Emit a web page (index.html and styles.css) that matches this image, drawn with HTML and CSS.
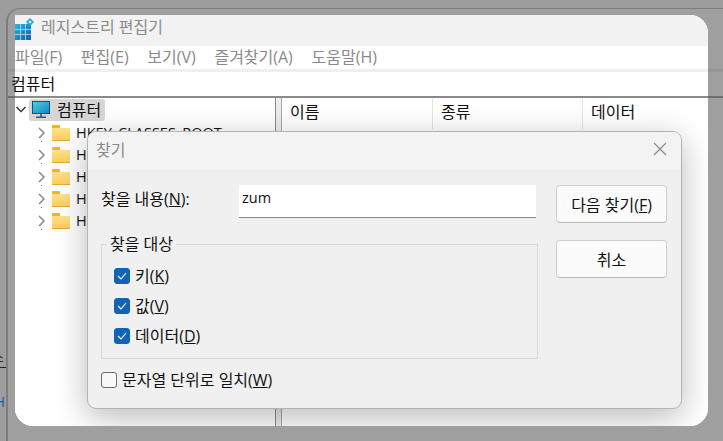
FILE: index.html
```html
<!DOCTYPE html>
<html lang="ko">
<head>
<meta charset="utf-8">
<title>레지스트리 편집기</title>
<link rel="stylesheet" href="styles.css">
</head>
<body>
<div class="desktop">
  <div class="backwin">
    <div class="back-strip"></div>
    <div class="back-line"></div>
    <div class="back-text">스</div>
    <div class="back-rule"></div>
    <div class="back-blue">H</div>
  </div>
  <main class="window">
    <header class="titlebar">
      <svg class="appicon" width="20" height="24" viewBox="0 0 20 24">
        <defs><linearGradient id="tile" x1="0" y1="0" x2="1" y2="1"><stop offset="0" stop-color="#2bb5dc"/><stop offset="1" stop-color="#0b62b5"/></linearGradient></defs>
        <rect x="0" y="7" width="16" height="16" fill="url(#tile)"/>
        <path d="M5.500 7v16M10.500 7v16M0 12.500h16M0 17.500h16" stroke="#bfe3f2" stroke-opacity=".75" stroke-width="1"/>
        <path d="M15 1l4 4-4 4-4-4z" fill="#2aa2d8"/>
        <rect x="13.800" y="3.800" width="2.400" height="2.400" fill="#cfeefa"/>
      </svg>
      <span class="title-text">레지스트리 편집기</span>
    </header>
    <nav class="menubar">
      <span>파일(F)</span><span>편집(E)</span><span>보기(V)</span><span>즐겨찾기(A)</span><span>도움말(H)</span>
    </nav>
    <div class="menu-gap"></div>
    <div class="addressbar"></div>
    <div class="panes">
      <section class="tree">
        <div class="tree-row root">
          <svg class="chev" width="12" height="12" viewBox="0 0 12 12"><path d="M1.500 4l4.500 4.500L10.500 4" fill="none" stroke="#333" stroke-width="1.500"/></svg>
          <div class="selected">
            <svg width="20" height="19" viewBox="0 0 20 19">
              <defs><linearGradient id="scr" x1="0" y1="0" x2="1" y2="1"><stop offset="0" stop-color="#4fd0e0"/><stop offset="1" stop-color="#0f86c6"/></linearGradient></defs>
              <rect x=".5" y=".5" width="17" height="12" fill="url(#scr)" stroke="#0b4f86"/>
              <rect x="8" y="13" width="2" height="3" fill="#5a6b78"/>
              <rect x="4" y="15.500" width="10" height="1.500" fill="#0b5f9a"/>
            </svg>
            <span class="root-label">컴퓨터</span>
          </div>
        </div>
        <div class="tree-row hive"><svg class="chev" width="10" height="12" viewBox="0 0 10 12"><path d="M2 1l5 5-5 5" fill="none" stroke="#8a8a8a" stroke-width="1.500"/></svg><span class="folder"></span><span class="hive-label">HKEY_CLASSES_ROOT</span></div>
        <div class="tree-row hive"><svg class="chev" width="10" height="12" viewBox="0 0 10 12"><path d="M2 1l5 5-5 5" fill="none" stroke="#8a8a8a" stroke-width="1.500"/></svg><span class="folder"></span><span class="hive-label">HKEY_CURRENT_USER</span></div>
        <div class="tree-row hive"><svg class="chev" width="10" height="12" viewBox="0 0 10 12"><path d="M2 1l5 5-5 5" fill="none" stroke="#8a8a8a" stroke-width="1.500"/></svg><span class="folder"></span><span class="hive-label">HKEY_LOCAL_MACHINE</span></div>
        <div class="tree-row hive"><svg class="chev" width="10" height="12" viewBox="0 0 10 12"><path d="M2 1l5 5-5 5" fill="none" stroke="#8a8a8a" stroke-width="1.500"/></svg><span class="folder"></span><span class="hive-label">HKEY_USERS</span></div>
        <div class="tree-row hive"><svg class="chev" width="10" height="12" viewBox="0 0 10 12"><path d="M2 1l5 5-5 5" fill="none" stroke="#8a8a8a" stroke-width="1.500"/></svg><span class="folder"></span><span class="hive-label">HKEY_CURRENT_CONFIG</span></div>
      </section>
      <div class="splitter"></div>
      <section class="list">
        <div class="list-head">
          <div class="col col-name">이름</div>
          <div class="col col-type">종류</div>
          <div class="col col-data">데이터</div>
        </div>
      </section>
    </div>
    <div class="dialog">
      <header class="dlg-title">
        <span>찾기</span>
        <svg width="14" height="14" viewBox="0 0 14 14"><path d="M1 1l12 12M13 1L1 13" stroke="#8a8a8a" stroke-width="1.200" fill="none"/></svg>
      </header>
      <div class="dlg-body">
        <div class="dlg-main">
          <div class="find-row">
            <label class="find-label">찾을 내용(<u>N</u>):</label>
            <div class="find-input">zum</div>
          </div>
          <fieldset class="group">
            <legend>찾을 대상</legend>
            <div class="check-row"><span class="check on"><svg width="10" height="8" viewBox="0 0 10 8"><path d="M1 4l3 3 5-6" fill="none" stroke="#fff" stroke-width="1.100"/></svg></span><span>키(<u>K</u>)</span></div>
            <div class="check-row"><span class="check on"><svg width="10" height="8" viewBox="0 0 10 8"><path d="M1 4l3 3 5-6" fill="none" stroke="#fff" stroke-width="1.100"/></svg></span><span>값(<u>V</u>)</span></div>
            <div class="check-row"><span class="check on"><svg width="10" height="8" viewBox="0 0 10 8"><path d="M1 4l3 3 5-6" fill="none" stroke="#fff" stroke-width="1.100"/></svg></span><span>데이터(<u>D</u>)</span></div>
          </fieldset>
          <div class="check-row whole"><span class="check"></span><span>문자열 단위로 일치(<u>W</u>)</span></div>
        </div>
        <div class="dlg-side">
          <button class="btn">다음 찾기(<u>F</u>)</button>
          <button class="btn">취소</button>
        </div>
      </div>
    </div>
  </main>
  <div class="address-text">컴퓨터</div>
</div>
</body>
</html>
```
FILE: styles.css
```css
* { box-sizing: border-box; }
html, body { margin: 0; padding: 0; }
body {
  width: 723px;
  height: 441px;
  overflow: hidden;
  font-family: "Open Sans", "Noto Sans CJK KR", sans-serif;
  font-size: 16px;
  color: #111;
}
.desktop {
  position: relative;
  width: 723px;
  height: 441px;
  overflow: hidden;
  background: #9d9d9d;
}
.backwin {
  position: absolute;
  left: 6px;
  top: 8px;
  width: 760px;
  height: 460px;
  border-top: 1px solid #7d7d7d;
  border-left: 2px solid #7d7d7d;
  border-top-left-radius: 14px;
  background: #9f9f9f;
}
.back-strip {
  position: absolute;
  left: 0;
  right: 0;
  top: 60px;
  height: 3px;
  background: #959595;
}
.back-line {
  position: absolute;
  left: 0;
  right: 0;
  top: 87px;
  height: 2px;
  background: #6e6e6e;
}
.back-text, .back-rule, .back-blue { position: absolute; }
.back-text { left: -17px; top: 339px; font-size: 14px; line-height: 18px; color: #333; }
.back-rule { left: -8px; top: 358px; width: 6px; height: 1px; background: #222; }
.back-blue { left: -14px; top: 383px; font-size: 15px; line-height: 18px; color: #1a5fa8; }

.window {
  position: absolute;
  left: 15px;
  top: 15px;
  width: 693px;
  height: 411px;
  overflow: hidden;
  background: #fff;
  border-radius: 0 18px 18px 18px;
  display: flex;
  flex-direction: column;
}
.titlebar {
  height: 31px;
  flex: none;
  background: #f2f2f2;
  display: flex;
  align-items: center;
  gap: 6px;
}
.appicon { flex: none; margin-top: -3px; }
.title-text { font-size: 16px; line-height: 24px; color: #8b8b8b; margin-top: -8px; }
.menubar {
  height: 23px;
  flex: none;
  background: #fff;
  display: flex;
  align-items: center;
  gap: 18.700px;
  font-size: 16px;
  line-height: 20px;
  color: #8a8a8a;
  padding-bottom: 1px;
}
.menu-gap { height: 3px; flex: none; background: #efefef; }
.addressbar { height: 24px; flex: none; background: #fff; }
.panes {
  flex: 1;
  display: flex;
  min-height: 0;
  border-top: 2px solid #8a8a8a;
}
.tree {
  width: 260px;
  flex: none;
  background: #fff;
  display: flex;
  flex-direction: column;
}
.tree-row {
  height: 22px;
  flex: none;
  display: flex;
  align-items: center;
}
.root .chev { margin-right: 2px; flex: none; }
.selected {
  height: 22px;
  width: 76px;
  background: #d6d6d6;
  border-radius: 3px;
  display: flex;
  align-items: center;
  gap: 5px;
  padding-left: 3px;
  margin-top: 2px;
}
.root-label { font-size: 16px; line-height: 20px; color: #111; }
.hive { padding-left: 22px; color: #111; font-size: 14.500px; position: relative; top: 2px; }
.hive::after {
  content: "";
  position: absolute;
  left: 26px;
  top: 19px;
  width: 1px;
  height: 1px;
  background: #777;
}
.hive .chev { flex: none; margin-right: 5px; }
.folder {
  position: relative;
  width: 18px;
  height: 13px;
  margin-top: 2px;
  margin-right: 6px;
  flex: none;
  background: linear-gradient(#ffe38a, #fbcf62);
  border-bottom: 1px solid #e8a92e;
}
.folder::before {
  content: "";
  position: absolute;
  left: 0;
  top: -3px;
  width: 8px;
  height: 3px;
  background: #f5b225;
  border-radius: 1px 1px 0 0;
}
.hive-label { white-space: nowrap; line-height: 20px; }
.splitter {
  width: 7px;
  flex: none;
  background: #ececec;
  border-left: 1px solid #8a8a8a;
  border-right: 1px solid #a8a8a8;
}
.list { flex: 1; background: #fff; }
.list-head { display: flex; height: 31px; }
.col { font-size: 16px; line-height: 28px; padding-left: 8px; position: relative; }
.col-name { width: 150px; }
.col-type { width: 150px; border-left: 1px solid #e4e4e4; }
.col-data { flex: 1; border-left: 1px solid #e4e4e4; }

.dialog {
  position: absolute;
  left: 72px;
  top: 116px;
  width: 595px;
  height: 278px;
  background: #f0f0f0;
  border: 1px solid #b4b4b4;
  border-radius: 9px;
  box-shadow: 0 8px 32px rgba(0, 0, 0, .28);
  display: flex;
  flex-direction: column;
  overflow: hidden;
}
.dlg-title {
  height: 37px;
  flex: none;
  background: #f3f3f3;
  display: flex;
  align-items: center;
  justify-content: space-between;
  padding: 0 14px 4px 8px;
  font-size: 16px;
  color: #8a8a8a;
}
.dlg-body {
  flex: 1;
  display: flex;
  padding: 16px 13px 0 13px;
  gap: 19px;
}
.dlg-main { width: 436px; flex: none; }
.find-row { display: flex; align-items: flex-start; height: 49px; }
.find-label { width: 138px; flex: none; line-height: 28px; font-size: 16px; }
.find-input {
  width: 297px;
  height: 33px;
  background: #fff;
  border-bottom: 1px solid #8a8a8a;
  padding-left: 3px;
  line-height: 26px;
  font-size: 14.500px;
}
.group {
  margin: 0;
  padding: 7px 0 0 12px;
  width: 437px;
  height: 125px;
  border: 1px solid #d9d9d9;
}
.group legend {
  padding: 0 3px;
  margin-left: -7px;
  font-size: 16px;
  line-height: 20px;
}
.check-row {
  display: flex;
  align-items: center;
  gap: 5px;
  height: 30px;
  font-size: 16px;
  line-height: 20px;
  white-space: pre;
}
.check {
  width: 16px;
  height: 16px;
  flex: none;
  border-radius: 3px;
  border: 1px solid #6e6e6e;
  background: #f8f8f8;
  display: flex;
  align-items: center;
  justify-content: center;
}
.check.on { background: #0f63b8; border-color: #0f63b8; }
.whole { margin-top: 6px; }
.dlg-side { display: flex; flex-direction: column; gap: 17px; }
.btn {
  width: 111px;
  height: 38px;
  border: 1px solid #cfcfcf;
  border-bottom-color: #b8b8b8;
  border-radius: 4px;
  background: #fbfbfb;
  font: inherit;
  font-size: 16px;
  color: #111;
  padding: 0;
}
.address-text {
  position: absolute;
  left: 11px;
  top: 73px;
  font-size: 16px;
  line-height: 22px;
  color: #111;
}
```
